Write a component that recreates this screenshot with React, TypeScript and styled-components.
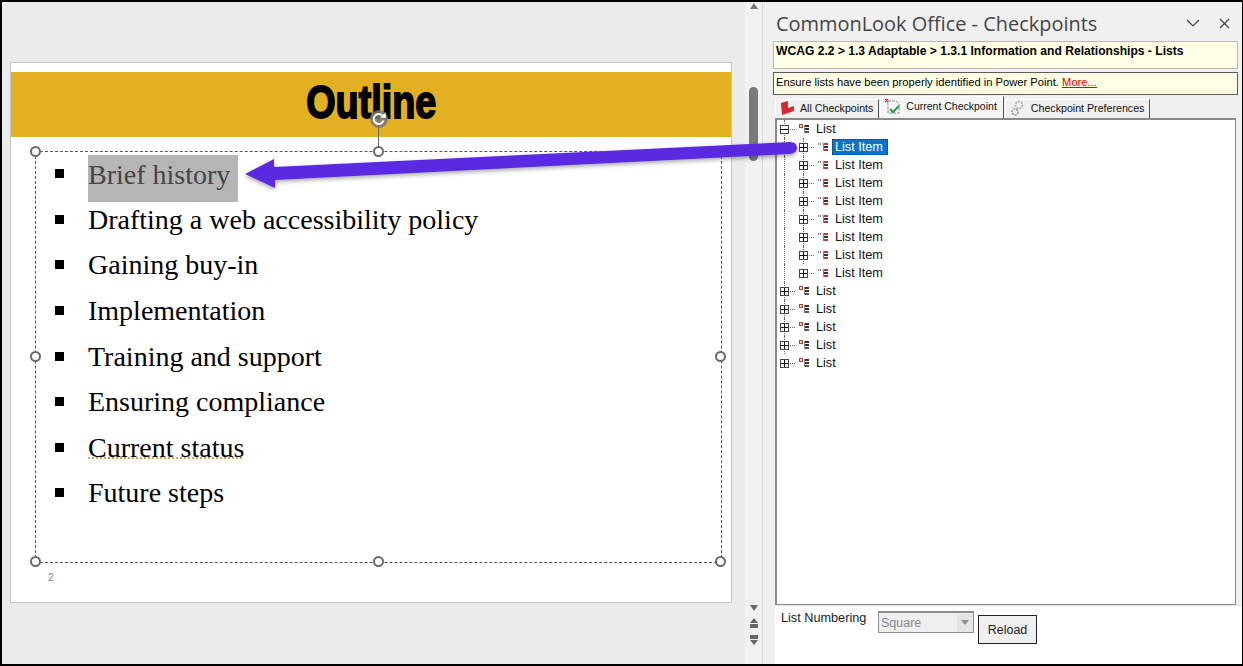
import React from 'react'
import styled, { createGlobalStyle } from 'styled-components'

const GlobalStyle = createGlobalStyle`
  html, body {
    margin: 0;
    padding: 0;
    background: #000;
    overflow: hidden;
  }
  * {
    box-sizing: border-box;
  }
`

const Page = styled.div`
  position: relative;
  width: 1243px;
  height: 666px;
  border: solid #000;
  border-width: 2px 1px 2px 2px;
  display: flex;
  overflow: hidden;
  background: #f0f0f0;
`

const Editor = styled.div`
  width: 743px;
  background: #ebebeb;
  padding: 60px 0 0 8px;
`

const Slide = styled.div`
  width: 722px;
  height: 541px;
  background: #fff;
  border: 1px solid #c6c6c6;
  padding-top: 9px;
`

const TitleBar = styled.div`
  height: 65px;
  background: #e3b022;
  display: flex;
  align-items: center;
  justify-content: center;
`

const TitleText = styled.div`
  font-family: "Liberation Sans", sans-serif;
  font-weight: 700;
  font-size: 46px;
  line-height: 50px;
  color: #000;
  -webkit-text-stroke: 1.8px #000;
  transform: translateY(-3px) scaleX(0.82);
`

const TextBox = styled.div`
  position: relative;
  width: 687px;
  height: 412px;
  margin: 14px 0 0 24px;
  border: 1px dashed #555;
`

const Handle = styled.div<{ $x: number; $y: number }>`
  position: absolute;
  left: ${p => p.$x}%;
  top: ${p => p.$y}%;
  width: 11px;
  height: 11px;
  margin: -6px 0 0 -6px;
  border-radius: 50%;
  border: 2px solid #6a6a6a;
  background: #fff;
`

const RotateStem = styled.div`
  position: absolute;
  left: 342px;
  top: -27px;
  width: 1px;
  height: 22px;
  background: #666;
`

const RotateIcon = styled.svg`
  position: absolute;
  left: 332px;
  top: -44px;
`

const Bullets = styled.ul`
  list-style: none;
  margin: 0;
  padding: 0;
  font-family: "Liberation Serif", serif;
  font-size: 28px;
  color: #000;
`

const Bullet = styled.li`
  display: flex;
  align-items: center;
  height: 45.6px;
  padding: 0 0 1px 19px;
`

const BulletMark = styled.span`
  width: 9px;
  height: 9px;
  background: #000;
  margin-right: 24px;
  margin-top: -1px;
  flex: none;
`

const Highlight = styled.span`
  display: block;
  width: 150px;
  height: 47px;
  line-height: 39px;
  background: #b5b5b5;
  color: #444;
  margin-top: 9px;
`

const Squiggle = styled.span`
  text-decoration: underline dotted #c9a65a 2px;
  text-underline-offset: 1px;
`

const PageNumber = styled.div`
  font-family: "Liberation Sans", sans-serif;
  font-size: 10.5px;
  color: #8a8a8a;
  margin: 8px 0 0 37px;
`

const ScrollBar = styled.div`
  width: 17px;
  background: #f1f1f1;
  display: flex;
  flex-direction: column;
  align-items: center;
  padding-top: 1px;
`

const ScrollThumb = styled.div`
  width: 9px;
  height: 74px;
  background: #7a7a7a;
  border-radius: 5px;
  margin-top: 77px;
`

const ScrollGlyphs = styled.div`
  margin-top: auto;
  margin-bottom: 18px;
  display: flex;
  flex-direction: column;
  gap: 6px;
`

const Pane = styled.div`
  flex: 1;
  display: flex;
  flex-direction: column;
  background: #f0f0f0;
  border-left: 1px solid #d8d8d8;
  padding-left: 10px;
  min-width: 0;
`

const PaneHeader = styled.div`
  height: 39px;
  display: flex;
  align-items: center;
  justify-content: space-between;
  padding: 3px 12px 0 3px;
  font-family: "Open Sans", sans-serif;
  font-size: 19.95px;
  color: #444;
  white-space: nowrap;
`

const PaneActions = styled.div`
  display: flex;
  align-items: center;
  gap: 19px;
  color: #444;
`

const Banner = styled.div<{ $strong?: boolean }>`
  width: 465px;
  background: #ffffe6;
  font-family: "Liberation Sans", sans-serif;
  color: #000;
  white-space: nowrap;
  height: ${p => (p.$strong ? '28px' : '23px')};
  margin-bottom: ${p => (p.$strong ? '3px' : '2px')};
  border: 1px solid ${p => (p.$strong ? '#b8b8b8' : '#5c5c5c')};
  font-weight: ${p => (p.$strong ? 700 : 400)};
  font-size: ${p => (p.$strong ? '12.1px' : '11.2px')};
  line-height: 18px;
  padding-left: 2px;
`

const MoreLink = styled.span`
  color: #e00000;
  text-decoration: underline;
`

const TabStrip = styled.div`
  display: flex;
  align-items: flex-end;
  height: 22px;
  padding-left: 2px;
  gap: 1px;
  margin-top: -1px;
`

const Tab = styled.div<{ $active?: boolean }>`
  display: flex;
  align-items: center;
  gap: 5px;
  background: ${p => (p.$active ? '#f5f5f5' : '#f0f0f0')};
  font-family: "Liberation Sans", sans-serif;
  font-size: ${p => (p.$active ? '10.5px' : '10.65px')};
  color: #111;
  white-space: nowrap;
  height: ${p => (p.$active ? '22px' : '19px')};
  padding: ${p => (p.$active ? '0 6px 3px 4px' : '0 5px 2px 4px')};
  border-top: 1px solid #fff;
  border-left: 1px solid #fff;
  border-right: 1px solid #555;
`

const TreeBox = styled.div`
  width: 461px;
  height: 487px;
  margin-left: 2px;
  background: #fff;
  border: solid #8a8a8a;
  border-width: 2px 1px 1px 2px;
  font-family: "Liberation Sans", sans-serif;
  font-size: 12.7px;
  color: #111;
`

const TreeRow = styled.div<{ $level: number; $guide?: boolean; $subGuide?: boolean }>`
  position: relative;
  display: flex;
  align-items: center;
  height: 18px;
  padding-left: ${p => 3 + p.$level * 19}px;

  ${p => p.$guide && `
    &::before {
      content: '';
      position: absolute;
      left: 7px;
      top: 0;
      height: 18px;
      border-left: 1px dotted #666;
    }
  `}

  ${p => p.$subGuide && `
    &::after {
      content: '';
      position: absolute;
      left: 26px;
      top: 0;
      height: 18px;
      border-left: 1px dotted #666;
    }
  `}
`

const Toggle = styled.span`
  position: relative;
  z-index: 1;
  width: 9px;
  height: 9px;
  flex: none;
  border: 1px solid #444;
  background: #fff;
  display: flex;
  align-items: center;
  justify-content: center;
`

const Connector = styled.span`
  width: 5px;
  flex: none;
  margin: 0 4px 0 1px;
  border-top: 1px dotted #666;
`

const NodeLabel = styled.span<{ $selected?: boolean }>`
  margin-left: ${p => (p.$selected ? '4px' : '7px')};
  padding: ${p => (p.$selected ? '0 5px 0 3px' : '0')};
  height: 16px;
  line-height: 16px;
  background: ${p => (p.$selected ? '#0a73cc' : 'transparent')};
  color: ${p => (p.$selected ? '#fff' : '#111')};
  outline: ${p => (p.$selected ? '1px dotted #0b3c6a' : 'none')};
  outline-offset: -1px;
`

const BottomBar = styled.div`
  flex: 1;
  margin-left: 2px;
  background: #fff;
  border-top: 1px solid #e3e3e3;
  display: flex;
  align-items: flex-start;
  padding: 5px 0 0 6px;
  font-family: "Liberation Sans", sans-serif;
  font-size: 12.7px;
  color: #222;
`

const FieldLabel = styled.span`
  width: 97px;
  flex: none;
`

const SelectBox = styled.div`
  width: 96px;
  height: 22px;
  background: #efefef;
  border: 1px solid #8d8d8d;
  border-top-width: 2px;
  color: #8a8a8a;
  font-size: 12.5px;
  display: flex;
  align-items: center;
  justify-content: space-between;
  padding-left: 2px;
`

const SelectArrow = styled.span`
  width: 16px;
  height: 18px;
  background: #e4e4e4;
  display: flex;
  align-items: center;
  justify-content: center;
`

const ReloadButton = styled.button`
  width: 59px;
  height: 29px;
  margin: 4px 0 0 4px;
  background: #f0f0f0;
  border: 1px solid #222;
  font-family: "Liberation Sans", sans-serif;
  font-size: 12.5px;
  color: #222;
  padding: 0;
`

const ArrowLayer = styled.svg`
  position: absolute;
  left: -2px;
  top: -2px;
  pointer-events: none;
`

const handles = [
  [0, 0], [50, 0], [100, 0], [0, 50], [100, 50], [0, 100], [50, 100], [100, 100],
]

const bulletItems = [
  'Drafting a web accessibility policy',
  'Gaining buy-in',
  'Implementation',
  'Training and support',
  'Ensuring compliance',
]

const NodeIcon = ({ child }: { child: boolean }) => (
  <svg width="10" height="10" viewBox="0 0 10 10" style={{ flex: 'none' }}>
    {child
      ? <path d="M0.5 1v2M2.5 1v2" stroke="#777" strokeWidth="1" />
      : <rect x="0.5" y="0.5" width="3" height="3" fill="#f3d9c9" stroke="#a8452c" />}
    <rect x="5" y="1" width="1" height="8" fill="#888" />
    <rect x="6" y="1" width="4" height="2" fill={child ? '#c0392b' : '#333'} />
    <rect x="6" y="4" width="4" height="2" fill="#333" />
    <rect x="6" y="7" width="4" height="2" fill={child ? '#c0392b' : '#555'} />
  </svg>
)

const PlusMinus = ({ plus }: { plus: boolean }) => (
  <svg width="7" height="7" viewBox="0 0 7 7">
    <rect x="0" y="3" width="7" height="1" fill="#111" />
    {plus && <rect x="3" y="0" width="1" height="7" fill="#111" />}
  </svg>
)

const TreeNode = ({ level, label, open, selected, guide, subGuide }: {
  level: number
  label: string
  open?: boolean
  selected?: boolean
  guide?: boolean
  subGuide?: boolean
}) => (
  <TreeRow $level={level} $guide={guide} $subGuide={subGuide}>
    <Toggle><PlusMinus plus={!open} /></Toggle>
    <Connector />
    <NodeIcon child={level > 0} />
    <NodeLabel $selected={selected}>{label}</NodeLabel>
  </TreeRow>
)

const App = () => {
  return <Page>
    <GlobalStyle />

    <Editor>
      <Slide>
        <TitleBar><TitleText>Outline</TitleText></TitleBar>
        <TextBox>
          <Bullets>
            <Bullet><BulletMark /><Highlight>Brief history</Highlight></Bullet>
            {bulletItems.map(item => (
              <Bullet key={item}><BulletMark />{item}</Bullet>
            ))}
            <Bullet><BulletMark /><Squiggle>Current status</Squiggle></Bullet>
            <Bullet><BulletMark />Future steps</Bullet>
          </Bullets>
          <RotateStem />
          <RotateIcon width="22" height="22" viewBox="0 0 22 22">
            <circle cx="11" cy="11" r="9" fill="#777" opacity="0.85" />
            <path d="M15.5 12.5a5 5 0 1 1-1.4-5.2" fill="none" stroke="#fff" strokeWidth="2" />
            <path d="M12.5 9.5l5.5 0.5-0.6-5.5z" fill="#fff" />
          </RotateIcon>
          {handles.map(([x, y]) => <Handle key={`${x}-${y}`} $x={x} $y={y} />)}
        </TextBox>
        <PageNumber>2</PageNumber>
      </Slide>
    </Editor>

    <ScrollBar>
      <svg width="10" height="7" viewBox="0 0 10 7"><path d="M5 0l4 6H1z" fill="#777" /></svg>
      <ScrollThumb />
      <ScrollGlyphs>
        <svg width="10" height="7" viewBox="0 0 10 7"><path d="M1 0h8L5 6z" fill="#666" /></svg>
        <svg width="10" height="11" viewBox="0 0 10 11"><path d="M5 0l4 5H1zM1 6h8v4H1z" fill="#666" /></svg>
        <svg width="10" height="11" viewBox="0 0 10 11"><path d="M1 0h8v4H1zM1 5h8l-4 5z" fill="#666" /></svg>
      </ScrollGlyphs>
    </ScrollBar>

    <Pane>
      <PaneHeader>
        CommonLook Office - Checkpoints
        <PaneActions>
          <svg width="14" height="8" viewBox="0 0 14 8"><path d="M1 1l6 6 6-6" fill="none" stroke="#444" strokeWidth="1.2" /></svg>
          <svg width="11" height="11" viewBox="0 0 11 11"><path d="M1 1l9 9M10 1l-9 9" fill="none" stroke="#444" strokeWidth="1.2" /></svg>
        </PaneActions>
      </PaneHeader>

      <Banner $strong>WCAG 2.2 &gt; 1.3 Adaptable &gt; 1.3.1 Information and Relationships - Lists</Banner>
      <Banner>Ensure lists have been properly identified in Power Point. <MoreLink>More...</MoreLink></Banner>

      <TabStrip>
        <Tab>
          <svg width="15" height="14" viewBox="0 0 15 14">
            <path d="M1 2l7-2v7l6-2v5L2 14z" fill="#d8282f" />
          </svg>
          All Checkpoints
        </Tab>
        <Tab $active>
          <svg width="16" height="15" viewBox="0 0 16 15">
            <path d="M3 2h8l3 3v9H3z" fill="#fff" stroke="#6d8fb5" strokeDasharray="3 1" />
            <path d="M0 0l3 3M3 0L0 3" stroke="#d22" strokeWidth="1.2" />
            <path d="M5 10l3 3 6-6" fill="none" stroke="#2f9b3f" strokeWidth="2.2" />
          </svg>
          Current Checkpoint
        </Tab>
        <Tab>
          <svg width="16" height="16" viewBox="0 0 16 16">
            <circle cx="9" cy="5" r="3.5" fill="none" stroke="#b5b5b5" strokeWidth="2" strokeDasharray="2 1" />
            <circle cx="5" cy="12" r="3" fill="none" stroke="#a5a5a5" strokeWidth="2" strokeDasharray="2 1" />
          </svg>
          Checkpoint Preferences
        </Tab>
      </TabStrip>

      <TreeBox>
        <TreeNode level={0} label="List" open guide />
        <TreeNode level={1} label="List Item" selected guide subGuide />
        {Array.from({ length: 7 }).map((_, i) => (
          <TreeNode key={`item${i}`} level={1} label="List Item" guide subGuide={i < 6} />
        ))}
        {Array.from({ length: 5 }).map((_, i) => (
          <TreeNode key={`list${i}`} level={0} label="List" guide={i < 4} />
        ))}
      </TreeBox>

      <BottomBar>
        <FieldLabel>List Numbering</FieldLabel>
        <SelectBox>
          Square
          <SelectArrow>
            <svg width="8" height="5" viewBox="0 0 8 5"><path d="M0 0h8L4 5z" fill="#8d8d8d" /></svg>
          </SelectArrow>
        </SelectBox>
        <ReloadButton>Reload</ReloadButton>
      </BottomBar>
    </Pane>

    <ArrowLayer width="1243" height="666" viewBox="0 0 1243 666">
      <defs>
        <filter id="arrowShadow" x="-5%" y="-40%" width="110%" height="180%">
          <feDropShadow dx="0" dy="2" stdDeviation="2" floodColor="#000" floodOpacity="0.35" />
        </filter>
      </defs>
      <path
        d="M245 174 L274 159 L274 167 L790 142 Q797 142 797 148 Q797 153 790 154 L275 180 L275 188 Z"
        fill="#5a2be0"
        filter="url(#arrowShadow)"
      />
    </ArrowLayer>
  </Page>
}

export default App
